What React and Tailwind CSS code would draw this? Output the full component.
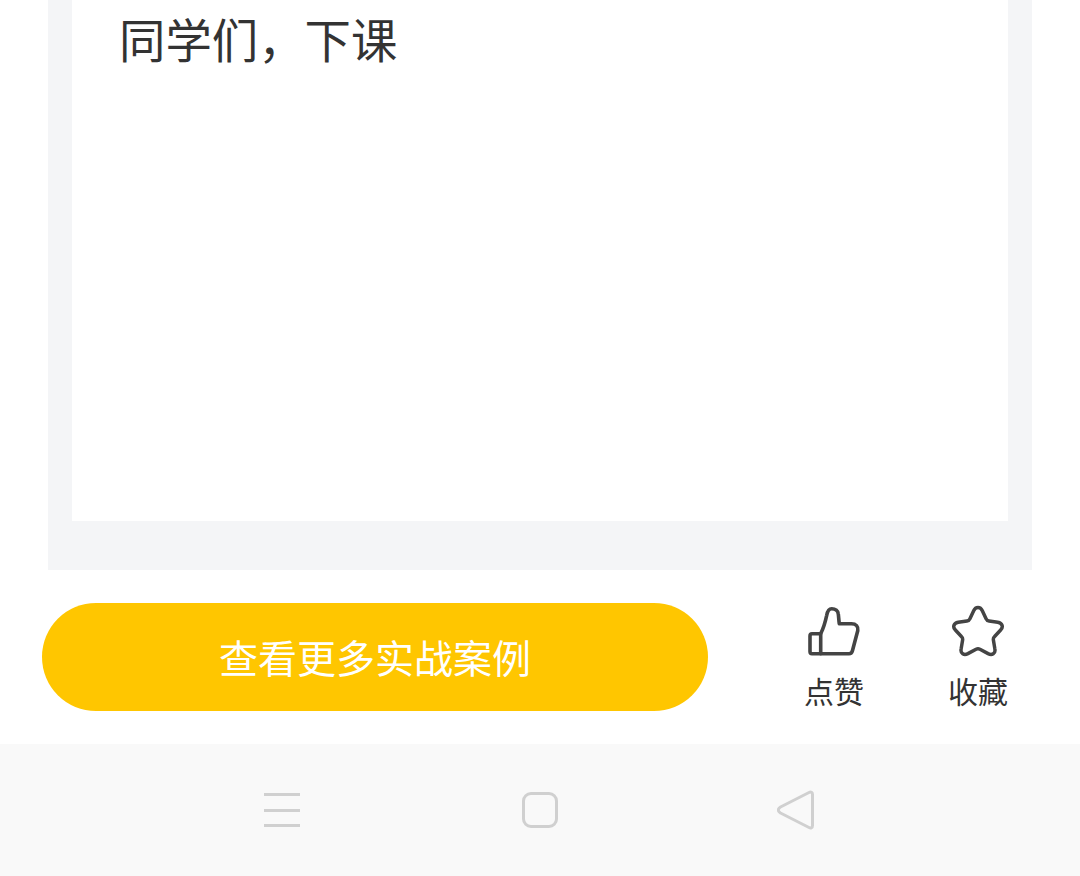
const ThumbIcon = () => (
    <svg width="54" height="50" viewBox="0 0 54 50" fill="none" stroke="#444444" strokeWidth="3.6" strokeLinejoin="round" strokeLinecap="round">
        <path d="M13.700 47.700 V27.700 C16.500 22 18.500 15 19.700 9.300 C20.500 5 22.500 2.700 24.700 2.700 C28.500 2.700 31 5 31.300 8 C31.700 11 31.800 14.500 32.300 17.700 H44.500 C49 17.700 51.500 20.500 50.800 24.500 L45.500 44.500 C45 46.500 44 47.700 42 47.700 Z" />
        <path d="M13.700 27.700 H5 C3.500 27.700 3 28.500 3 30 V45.500 C3 47 3.500 47.700 5 47.700 H13.700" />
    </svg>
);

const StarIcon = () => (
    <svg width="54" height="52" viewBox="0 0 56 54" fill="none" stroke="#444444" strokeWidth="3.600" strokeLinejoin="round">
        <path d="M23.500 6 C25.500 1.500 30.500 1.500 32.500 6 L36.500 14.500 C37 15.800 38 16.500 39.500 16.700 L48.500 18 C53.500 18.800 54.500 23 51.500 26 L45 33 C44 34 43.700 35 44 36.500 L45.500 45.500 C46.500 50.500 42.500 52.500 38.500 50.500 L30 46 C28.700 45.300 27.300 45.300 26 46 L17.500 50.500 C13.500 52.500 9.500 50.500 10.500 45.500 L12 36.500 C12.300 35 12 34 11 33 L4.500 26 C1.500 23 2.500 18.800 7.500 18 L16.500 16.700 C18 16.500 19 15.800 19.500 14.500 Z" />
    </svg>
);

const BackIcon = () => (
    <svg width="37" height="40" viewBox="0 0 37 40" fill="none" stroke="#d0d0d0" strokeWidth="3" strokeLinejoin="round">
        <path d="M32 2.500 C34 1.500 35.500 2.500 35.500 4.500 V35.500 C35.500 37.500 34 38.500 32 37.500 L3.500 23 C0.500 21 0.500 19 3.500 17 Z" />
    </svg>
);

const ActionItem = ({ icon, label }) => (
    <div className="flex w-[58px] flex-col items-center">
        <div className="flex h-[54px] items-center justify-center">{icon}</div>
        <span className="mt-[12px] whitespace-nowrap text-[30px] leading-[40px] text-[#333333]">{label}</span>
    </div>
);

const App = () => {
    return (
        <div className="flex h-[876px] w-[1080px] flex-col overflow-hidden bg-white font-['Noto_Sans_CJK_SC','Noto_Sans',sans-serif]">
            <div className="mx-[48px] h-[570px] bg-[#f4f5f7] px-[24px] pb-[49px]">
                <div className="h-full bg-white px-[47px] pt-[9px]">
                    <p className="text-[46.4px] leading-[58px] text-[#333333]">同学们，下课</p>
                </div>
            </div>
            <div className="flex h-[174px] items-start pl-[42px] pt-[33px]">
                <button className="flex h-[108px] w-[666px] items-center justify-center rounded-full bg-[#ffc600] pb-[2px] text-[39px] text-white">
                    查看更多实战案例
                </button>
                <div className="ml-[97px] flex gap-[86px] pt-[1px]">
                    <ActionItem icon={<ThumbIcon />} label="点赞" />
                    <ActionItem icon={<StarIcon />} label="收藏" />
                </div>
            </div>
            <div className="flex h-[132px] items-center bg-[#f9f9f9] pl-[264px]">
                <div className="flex h-[34px] w-[36px] flex-col justify-between">
                    <div className="h-[3px] bg-[#d0d0d0]" />
                    <div className="h-[3px] bg-[#d0d0d0]" />
                    <div className="h-[3px] bg-[#d0d0d0]" />
                </div>
                <div className="ml-[222px] h-[36px] w-[36px] rounded-[9px] border-[3px] border-[#d0d0d0]" />
                <div className="ml-[219px] flex">
                    <BackIcon />
                </div>
            </div>
        </div>
    );
};

export default App;
